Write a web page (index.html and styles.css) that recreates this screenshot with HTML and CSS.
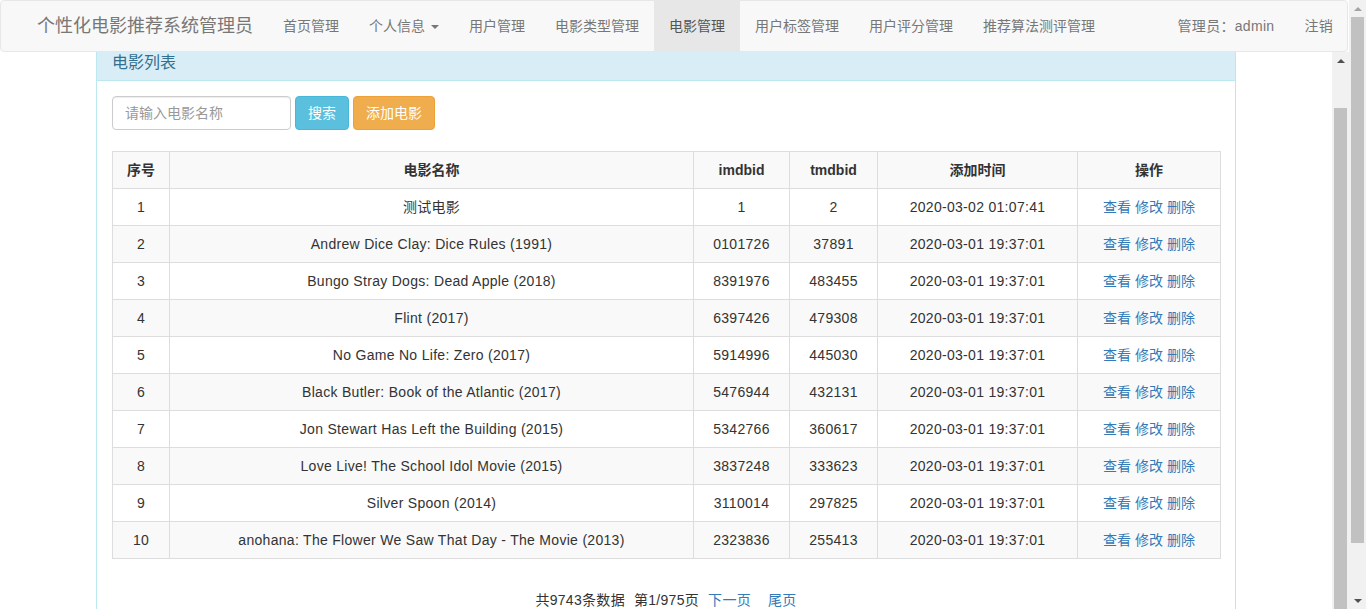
FILE: index.html
```html
<!DOCTYPE html>
<html lang="zh-CN">
<head>
<meta charset="utf-8">
<title>电影管理</title>
<link rel="stylesheet" href="styles.css">
</head>
<body>
<div class="screen">
  <div class="main">
    <nav class="navbar">
      <a class="brand">个性化电影推荐系统管理员</a>
      <ul class="nav">
        <li><a>首页管理</a></li>
        <li><a>个人信息 <span class="caret"></span></a></li>
        <li><a>用户管理</a></li>
        <li><a>电影类型管理</a></li>
        <li class="active"><a>电影管理</a></li>
        <li><a>用户标签管理</a></li>
        <li><a>用户评分管理</a></li>
        <li><a>推荐算法测评管理</a></li>
      </ul>
      <ul class="nav nav-right">
        <li><a>管理员：admin</a></li>
        <li><a>注销</a></li>
      </ul>
    </nav>
    <div class="frame">
      <div class="content">
        <div class="container">
          <div class="panel">
            <div class="panel-heading">电影列表</div>
            <div class="panel-body">
              <div class="toolbar">
                <input class="form-control" type="text" placeholder="请输入电影名称">
                <button class="btn btn-info">搜索</button>
                <button class="btn btn-warning">添加电影</button>
              </div>
              <table class="table">
                <colgroup>
                  <col class="c1"><col class="c2"><col class="c3"><col class="c4"><col class="c5"><col class="c6">
                </colgroup>
                <tbody>
                  <tr><th>序号</th><th>电影名称</th><th>imdbid</th><th>tmdbid</th><th>添加时间</th><th>操作</th></tr>
                  <tr><td>1</td><td>测试电影</td><td>1</td><td>2</td><td>2020-03-02 01:07:41</td><td class="ops"><a>查看</a> <a>修改</a> <a>删除</a></td></tr>
                  <tr><td>2</td><td>Andrew Dice Clay: Dice Rules (1991)</td><td>0101726</td><td>37891</td><td>2020-03-01 19:37:01</td><td class="ops"><a>查看</a> <a>修改</a> <a>删除</a></td></tr>
                  <tr><td>3</td><td>Bungo Stray Dogs: Dead Apple (2018)</td><td>8391976</td><td>483455</td><td>2020-03-01 19:37:01</td><td class="ops"><a>查看</a> <a>修改</a> <a>删除</a></td></tr>
                  <tr><td>4</td><td>Flint (2017)</td><td>6397426</td><td>479308</td><td>2020-03-01 19:37:01</td><td class="ops"><a>查看</a> <a>修改</a> <a>删除</a></td></tr>
                  <tr><td>5</td><td>No Game No Life: Zero (2017)</td><td>5914996</td><td>445030</td><td>2020-03-01 19:37:01</td><td class="ops"><a>查看</a> <a>修改</a> <a>删除</a></td></tr>
                  <tr><td>6</td><td>Black Butler: Book of the Atlantic (2017)</td><td>5476944</td><td>432131</td><td>2020-03-01 19:37:01</td><td class="ops"><a>查看</a> <a>修改</a> <a>删除</a></td></tr>
                  <tr><td>7</td><td>Jon Stewart Has Left the Building (2015)</td><td>5342766</td><td>360617</td><td>2020-03-01 19:37:01</td><td class="ops"><a>查看</a> <a>修改</a> <a>删除</a></td></tr>
                  <tr><td>8</td><td>Love Live! The School Idol Movie (2015)</td><td>3837248</td><td>333623</td><td>2020-03-01 19:37:01</td><td class="ops"><a>查看</a> <a>修改</a> <a>删除</a></td></tr>
                  <tr><td>9</td><td>Silver Spoon (2014)</td><td>3110014</td><td>297825</td><td>2020-03-01 19:37:01</td><td class="ops"><a>查看</a> <a>修改</a> <a>删除</a></td></tr>
                  <tr><td>10</td><td>anohana: The Flower We Saw That Day - The Movie (2013)</td><td>2323836</td><td>255413</td><td>2020-03-01 19:37:01</td><td class="ops"><a>查看</a> <a>修改</a> <a>删除</a></td></tr>
                </tbody>
              </table>
              <div class="pager">
                <span>共9743条数据</span><span class="pg">第1/975页</span><a class="pg">下一页</a><a class="pg-last">尾页</a>
              </div>
            </div>
          </div>
        </div>
      </div>
      <div class="scrollbar inner">
        <div class="sb-btn"><span class="arrow-up dark"></span></div>
        <div class="sb-gap"></div>
        <div class="sb-thumb"></div>
      </div>
    </div>
  </div>
  <div class="scrollbar outer">
    <div class="sb-btn"><span class="arrow-up light"></span></div>
    <div class="sb-thumb"></div>
    <div class="sb-track"></div>
    <div class="sb-btn"><span class="arrow-down dark"></span></div>
  </div>
</div>
</body>
</html>
```
FILE: styles.css
```css
* { box-sizing: border-box; }
html, body {
  margin: 0;
  padding: 0;
  height: 609px;
  overflow: hidden;
  background: #fff;
}
body {
  font-family: "Liberation Sans", "Noto Sans CJK SC", sans-serif;
  font-size: 14px;
  line-height: 20px;
  color: #333;
}
a { color: #337ab7; text-decoration: none; cursor: pointer; }

.screen {
  display: flex;
  height: 609px;
  width: 1366px;
}
.main {
  width: 1349px;
  display: flex;
  flex-direction: column;
  height: 609px;
}

/* navbar */
.navbar {
  width: 1348px;
  height: 52px;
  flex: none;
  display: flex;
  align-items: stretch;
  background: #f8f8f8;
  border: 1px solid #e7e7e7;
  border-radius: 4px;
  padding-left: 21px;
  position: relative;
  z-index: 2;
}
.brand {
  font-size: 18px;
  line-height: 20px;
  padding: 15px 15px;
  color: #777;
}
.nav {
  list-style: none;
  margin: 0;
  padding: 0;
  display: flex;
}
.nav li a {
  display: block;
  padding: 15px 15px;
  line-height: 20px;
  color: #777;
  height: 50px;
}
.nav li.active a {
  background: #e7e7e7;
  color: #555;
}
.nav-right {
  margin-left: auto;
  margin-right: -1px;
}
.nav-right a { letter-spacing: 0.3px; }
.caret {
  display: inline-block;
  width: 0;
  height: 0;
  margin-left: 2px;
  vertical-align: middle;
  border-top: 4px solid;
  border-left: 4px solid transparent;
  border-right: 4px solid transparent;
}

/* frame */
.frame {
  flex: 1;
  display: flex;
  min-height: 0;
}
.content {
  width: 1332px;
  overflow: hidden;
}
.container {
  width: 1170px;
  margin: 0 auto;
  padding: 0 15px;
}
.panel {
  border: 1px solid #bce8f1;
  border-top: none;
  border-radius: 0 0 4px 4px;
  background: #fff;
}
.panel-heading {
  background: #d9edf7;
  color: #31708f;
  border-bottom: 1px solid #bce8f1;
  padding: 1px 15px 7px;
  font-size: 16px;
  line-height: 20px;
}
.panel-body {
  padding: 15px;
}
.toolbar {
  display: flex;
  gap: 4px;
  margin-bottom: 21px;
}
.form-control {
  width: 179px;
  height: 34px;
  padding: 6px 12px;
  font-family: inherit;
  font-size: 14px;
  color: #555;
  border: 1px solid #ccc;
  border-radius: 4px;
  box-shadow: inset 0 1px 1px rgba(0,0,0,.075);
  outline: none;
}
.form-control::placeholder { color: #999; }
.btn {
  height: 34px;
  padding: 6px 12px;
  font-family: inherit;
  font-size: 14px;
  line-height: 20px;
  border: 1px solid transparent;
  border-radius: 4px;
  color: #fff;
}
.btn-info { background: #5bc0de; border-color: #46b8da; }
.btn-warning { background: #f0ad4e; border-color: #eea236; }

/* table */
.table {
  width: 100%;
  border-collapse: collapse;
  table-layout: fixed;
  margin-bottom: 20px;
}
.c1 { width: 57px; }
.c2 { width: 524px; }
.c3 { width: 96px; }
.c4 { width: 88px; }
.c5 { width: 200px; }
.c6 { width: 143px; }
.table th, .table td {
  border: 1px solid #ddd;
  padding: 8px;
  line-height: 20px;
  text-align: center;
  white-space: nowrap;
}
.table td { letter-spacing: 0.3px; }
.table td.ops { letter-spacing: 0; }
.table th { font-weight: bold; }
.table tr:nth-child(odd) { background: #f9f9f9; }
.ops a { color: #337ab7; }

.pager {
  text-align: center;
  margin-top: 31px;
  letter-spacing: 0.3px;
}
.pg { margin-left: 9px; }
.pg-last { margin-left: 17px; }

/* scrollbars */
.scrollbar {
  width: 17px;
  flex: none;
  background: #f1f1f1;
  display: flex;
  flex-direction: column;
}
.outer { height: 609px; }
.inner { height: 557px; }
.sb-btn {
  height: 17px;
  flex: none;
  display: flex;
  align-items: center;
  justify-content: center;
}
.sb-gap { height: 39px; flex: none; }
.sb-thumb {
  flex: none;
  margin: 0 2px;
  background: #c1c1c1;
}
.outer .sb-thumb { height: 526px; }
.inner .sb-thumb { flex: 1; }
.sb-track { flex: 1; }
.arrow-up, .arrow-down {
  width: 0;
  height: 0;
  border-left: 4px solid transparent;
  border-right: 4px solid transparent;
}
.arrow-up { border-bottom: 4px solid; }
.arrow-down { border-top: 4px solid; }
.dark { color: #505050; }
.light { color: #a3a3a3; }
```
